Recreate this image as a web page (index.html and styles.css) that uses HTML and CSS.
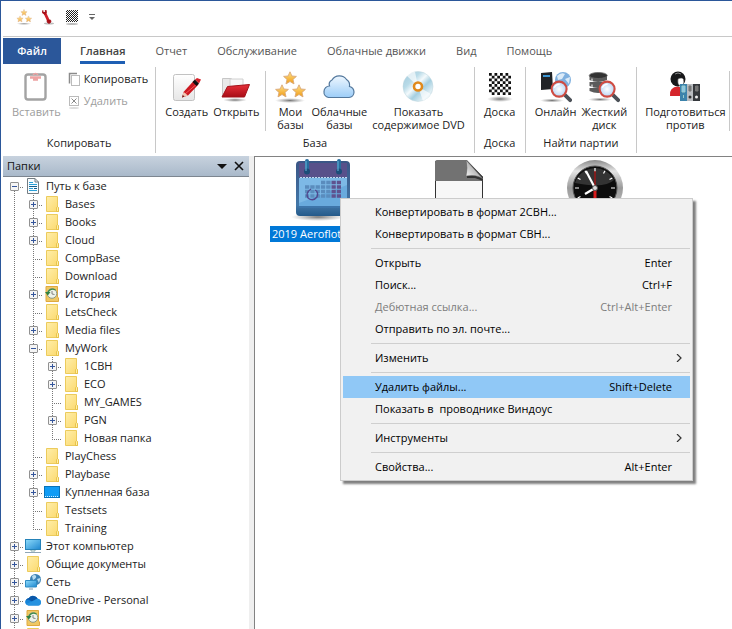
FILE: index.html
```html
<!DOCTYPE html>
<html lang="ru">
<head>
<meta charset="utf-8">
<meta name="viewport" content="width=device-width, initial-scale=1">
<title>Папки</title>
<link rel="stylesheet" href="styles.css">
</head>
<body>
<svg class="defs" aria-hidden="true">
  <defs>
    <linearGradient id="g-folder" x1="0" y1="0" x2="1" y2="1"><stop offset="0" stop-color="#ffeeaa"/><stop offset="1" stop-color="#fbd96d"/></linearGradient>
    <linearGradient id="g-star" x1="0" y1="0" x2="0" y2="1"><stop offset="0" stop-color="#ffe48a"/><stop offset="1" stop-color="#f09a14"/></linearGradient>
    <linearGradient id="g-cloud" x1="0" y1="0" x2="0" y2="1"><stop offset="0" stop-color="#eef7ff"/><stop offset="1" stop-color="#9ccdf8"/></linearGradient>
    <linearGradient id="g-red" x1="0" y1="0" x2="0" y2="1"><stop offset="0" stop-color="#e8303a"/><stop offset="1" stop-color="#a80d16"/></linearGradient>
    <linearGradient id="g-paper" x1="0" y1="0" x2="0" y2="1"><stop offset="0" stop-color="#ffffff"/><stop offset="1" stop-color="#e6e6e6"/></linearGradient>
    <linearGradient id="g-screen" x1="0" y1="0" x2="1" y2="1"><stop offset="0" stop-color="#8fdcfb"/><stop offset="1" stop-color="#1d86cf"/></linearGradient>
    <linearGradient id="g-disc" x1="0" y1="0" x2="1" y2="1"><stop offset="0" stop-color="#9fc9dc"/><stop offset=".3" stop-color="#b9dbe8"/><stop offset=".45" stop-color="#f4fafc"/><stop offset=".6" stop-color="#a5cfe0"/><stop offset=".8" stop-color="#e2f0f5"/><stop offset="1" stop-color="#8fbccf"/></linearGradient>
    <radialGradient id="g-shade"><stop offset="0" stop-color="#777"/><stop offset="1" stop-color="#999" stop-opacity="0"/></radialGradient>
    <radialGradient id="g-lens"><stop offset="0" stop-color="#ffffff"/><stop offset="1" stop-color="#b9d5f4"/></radialGradient>
    <linearGradient id="g-rim" x1="0" y1="0" x2="0" y2="1"><stop offset="0" stop-color="#8a8a8a"/><stop offset=".2" stop-color="#e4e4e4"/><stop offset=".5" stop-color="#9a9a9a"/><stop offset="1" stop-color="#ccc"/></linearGradient>
    <linearGradient id="g-curl" x1="0" y1="1" x2="1" y2="0"><stop offset="0" stop-color="#fafafa"/><stop offset="1" stop-color="#777"/></linearGradient>
    <linearGradient id="g-cal" x1="0" y1="0" x2="0" y2="1"><stop offset="0" stop-color="#3a5585"/><stop offset=".8" stop-color="#4277a8"/><stop offset="1" stop-color="#245a8a"/></linearGradient>
    <pattern id="p-chess" width="5.5" height="5.5" patternUnits="userSpaceOnUse" x="5" y="2"><rect width="5.5" height="5.5" fill="#fff"/><rect width="2.75" height="2.75" fill="#111"/><rect x="2.75" y="2.75" width="2.75" height="2.75" fill="#111"/></pattern>

    <symbol id="star" viewBox="0 0 14 14"><path d="M7 .8 8.9 5 13.4 5.4 10 8.4 11 12.9 7 10.5 3 12.9 4 8.4.6 5.4 5.1 5Z" fill="url(#g-star)" stroke="#d9a878" stroke-width=".9"/></symbol>
    <symbol id="stars" viewBox="0 0 32 32"><ellipse cx="16" cy="29.500" rx="15" ry="2.500" fill="url(#g-shade)"/><use href="#star" x="9" y="0" width="14" height="14"/><use href="#star" x="1" y="13" width="14" height="14"/><use href="#star" x="18" y="13" width="14" height="14"/></symbol>
    <symbol id="board" viewBox="0 0 32 32"><ellipse cx="16" cy="28" rx="13" ry="3" fill="url(#g-shade)"/><rect x="5" y="2" width="22" height="22" fill="url(#p-chess)"/></symbol>
    <symbol id="folder" viewBox="0 0 18 18"><path d="M3.500 1.500H14.500V12L15.500 13V16.500H3.500Z" fill="url(#g-folder)" stroke="#eccb5c"/><path d="M13.500 16.500V12.500Q14.500 11 15.500 12.500V16.500Z" fill="#fff0a8" stroke="#e3bb3c" stroke-width=".8"/></symbol>
    <symbol id="history" viewBox="0 0 18 18"><path d="M3 1.500H14.500V12L15.500 13V16.500H3Z" fill="#efc864" stroke="#dfa93e"/><circle cx="9" cy="8.500" r="4.800" fill="#eef3ea" stroke="#8b9884" stroke-width="1"/><path d="M9 6V9L11.500 9.500" fill="none" stroke="#777" stroke-width=".9"/><path d="M12.500 5A5 5 0 0 0 5 7.500" fill="none" stroke="#3f8a4a" stroke-width="1.400"/><path d="M2 7H7.500L4.800 10.500Z" fill="#2f8240"/></symbol>
    <symbol id="doc" viewBox="0 0 18 18"><path d="M3.500 1.500H11L14.500 5V16.500H3.500Z" fill="#f8fcff" stroke="#737c82"/><path d="M11 1.500V5H14.500" fill="none" stroke="#737c82"/><path d="M5 5.500H9M5 7.500H13M5 11.500H9M5 13.500H13" stroke="#2aa0d8"/><path d="M5 9.500H13M10 11.500H13" stroke="#155d8c"/></symbol>
    <symbol id="tile" viewBox="0 0 18 18"><rect x="1.500" y="3.500" width="15" height="11" fill="#109cf5" stroke="#0873b9"/><path d="M2 13.500H16" stroke="#d5efff" stroke-dasharray="1 1"/></symbol>
    <symbol id="pc" viewBox="0 0 18 18"><rect x="1.500" y="2.500" width="15" height="10" fill="url(#g-screen)" stroke="#2582b8"/><path d="M7 13V14H11V13" stroke="#8aa" fill="none"/><path d="M1 15.500H17" stroke="#8fa6b5"/></symbol>
    <symbol id="net" viewBox="0 0 18 18"><circle cx="11.500" cy="6.500" r="5.500" fill="#3c82b4"/><path d="M8 3Q11 1 12 3T9 7ZM13 6L16.500 5 15 10Z" fill="#b8dcf0"/><path d="M1.500 7.500H12.500V14H1.500Z" fill="url(#g-screen)" stroke="#2f8cc4"/><path d="M5 16H9" stroke="#7e98a8"/></symbol>
    <symbol id="onedrive" viewBox="0 0 18 18"><path d="M4.500 14.500A3.500 3.500 0 0 1 1.500 9.500Q3 7 5 7A5 5 0 0 1 13.500 7.500Q17 8.500 17 11.500T14 14.500Z" fill="#1684d8"/><path d="M1.500 9.500Q3 7 5 7A5 5 0 0 1 13.500 7.500L8 10.500 4 8.500Z" fill="#0a57a8"/><path d="M2 13 8 10.500 13.500 7.500Q17 8.500 17 11.500C16 14.500 15 14.500 14 14.500H4.500Z" fill="#2692e0"/></symbol>
    <symbol id="lens" viewBox="0 0 24 24"><path d="M15.500 15.500 21 21" stroke="#4c5158" stroke-width="4" stroke-linecap="round"/><circle cx="9.500" cy="9.500" r="7.800" fill="url(#g-lens)" stroke="#cf4c43" stroke-width="2.200"/><path d="M4.500 8Q6 4.500 10 4.500" fill="none" stroke="#fff" stroke-width="1.500"/></symbol>
  </defs>
</svg>

<div class="app">
  <header class="quickbar" aria-label="Быстрый доступ">
    <button class="quick" aria-label="Мои базы"><svg class="i16 pale" viewBox="0 0 32 32"><use href="#stars"/></svg></button>
    <button class="quick" aria-label="Параметры"><svg class="i16" viewBox="0 0 16 16"><ellipse cx="9" cy="14.500" rx="5" ry="1" fill="#bbb"/><path d="M4.500 3 8.500 12" stroke="#d01f29" stroke-width="2.800"/><path d="M2.500 1.500 2.500 4 5 5.500 6.500 3.500 6 1M7.500 11 7 13 9 14.500 11 13 10.500 11Z" fill="#a70f18" stroke="#a70f18" stroke-width=".8"/><circle cx="4.200" cy="2" r="1" fill="#fff"/></svg></button>
    <button class="quick" aria-label="Доска"><svg class="i16" viewBox="0 0 16 16"><ellipse cx="8" cy="15" rx="6" ry="1" fill="#bbb"/><path d="M2 2.500H14M2 4.500H14M2 6.500H14M2 8.500H14M2 10.500H14M2 12.500H14" stroke="#222" stroke-dasharray="1 1"/><path d="M3 1.500H14M3 3.500H14M3 5.500H14M3 7.500H14M3 9.500H14M3 11.500H14" stroke="#222" stroke-dasharray="1 1"/></svg></button>
    <button class="quick" aria-label="Настройка панели"><svg class="i8" viewBox="0 0 8 8"><path d="M1 1.500H7" stroke="#666"/><path d="M1 4H7L4 7Z" fill="#666"/></svg></button>
  </header>

  <nav class="tabs">
    <button class="file-tab">Файл</button>
    <button class="tab active">Главная</button>
    <button class="tab">Отчет</button>
    <button class="tab">Обслуживание</button>
    <button class="tab">Облачные движки</button>
    <button class="tab">Вид</button>
    <button class="tab">Помощь</button>
  </nav>

  <div class="ribbon">
    <section class="group">
      <div class="tools">
        <button class="big off" disabled><svg class="i32" viewBox="0 0 32 32"><rect x="5.500" y="3.500" width="20" height="25" rx="2.500" fill="#fff" stroke="#a3a3a3" stroke-width="2.400"/><path d="M10 6.500H21M13 8.500H18" stroke="#eda3a3" stroke-width="2.500"/><path d="M13 4Q15.500 1 18 4" fill="none" stroke="#eda3a3" stroke-width="1.500"/></svg><span>Вставить</span></button>
        <div class="stack">
          <button class="small"><svg class="i16" viewBox="0 0 16 16"><path d="M3.500 12.500V2.500H11" fill="none" stroke="#8b8b8b" stroke-width="1.500"/><rect x="5.500" y="4.500" width="8" height="10" fill="#fff" stroke="#bcbcbc"/></svg><span>Копировать</span></button>
          <button class="small off" disabled><svg class="i16" viewBox="0 0 16 16"><ellipse cx="8" cy="15" rx="5" ry="1" fill="#ddd"/><rect x="3.500" y="3.500" width="9" height="9" fill="#fff" stroke="#bbb"/><path d="M5.500 5.500 10.500 10.500M10.500 5.500 5.500 10.500" stroke="#8a8a8a"/></svg><span>Удалить</span></button>
        </div>
      </div>
      <h2>Копировать</h2>
    </section>
    <section class="group">
      <div class="tools">
        <button class="big"><svg class="i32" viewBox="0 0 32 32"><rect x="2.500" y="3.500" width="21" height="26" rx="2" fill="url(#g-paper)" stroke="#c2c2c2"/><path d="M11 26.500 12.500 21 23 9.500 27.500 13.500 17 24.500Z" fill="#cc1820"/><path d="M12.500 21 14 23 27 12" fill="none" stroke="#f2565a"/><path d="M21.500 11 24 8.500 28 12.500 25.500 15Z" fill="#111"/><path d="M24 8.500 26 7 30 8.500 28 12.500Z" fill="#d7222b"/><path d="M11 26.500 12.500 21 17 24.500Z" fill="#efc8b4"/><path d="M11 26.500 11.800 24 13.500 25.500Z" fill="#611"/></svg><span>Создать</span></button>
        <button class="big"><svg class="i32" viewBox="0 0 32 32"><ellipse cx="15" cy="29" rx="12" ry="2" fill="url(#g-shade)"/><path d="M2.500 25V7.500H11L13.500 9.500H18V25Z" fill="#e9e9e9" stroke="#c6c6c6"/><path d="M10 8H23V20H10Z" fill="#f7f7f7" stroke="#d0d0d0"/><path d="M2 26 7.500 15.500 29.500 13.500 24.500 26Z" fill="url(#g-red)" stroke="#a3121a"/></svg><span>Открыть</span></button>
        <span class="rule"></span>
        <button class="big"><svg class="i32"><use href="#stars"/></svg><span>Мои<br>базы</span></button>
        <button class="big"><svg class="i32" viewBox="0 0 32 32"><path d="M5.500 26.500A5.500 5.500 0 0 1 1 20.500 5.500 5.500 0 0 1 6.500 15 5 5 0 0 1 9 9 8.500 8 0 0 1 23.500 8.500 7 7 0 0 1 26.500 15.500 6 6 0 0 1 31 21 5.500 5.500 0 0 1 26 26.500Z" fill="url(#g-cloud)" stroke="#52779c" stroke-width="1.200"/></svg><span>Облачные<br>базы</span></button>
        <button class="big"><svg class="i32" viewBox="0 0 32 32"><circle cx="16" cy="15.500" r="15" fill="url(#g-disc)" stroke="#bdd4dd" stroke-width=".5"/><path d="M16 15.500 4 4Q8 .5 13 .8ZM16 15.500 29 23Q26 28 21 30Z" fill="#fff" opacity=".65"/><circle cx="16" cy="15.500" r="4" fill="#fff" stroke="#e08a1c" stroke-width="2.600"/></svg><span>Показать<br>содержимое DVD</span></button>
      </div>
      <h2>База</h2>
    </section>
    <section class="group">
      <div class="tools">
        <button class="big"><svg class="i32"><use href="#board"/></svg><span>Доска</span></button>
      </div>
      <h2>Доска</h2>
    </section>
    <section class="group">
      <div class="tools">
        <button class="big"><svg class="i32" viewBox="0 0 32 32"><ellipse cx="12" cy="29.500" rx="12" ry="2" fill="url(#g-shade)"/><circle cx="23" cy="9" r="8" fill="#7fb0df"/><path d="M17 5Q21 1 25 3L22 8 18 9ZM25 8 30 6 29 13Z" fill="#dcebf8"/><path d="M1 2 12 1 13 18 1 19Z" fill="#202327"/><path d="M3 5H10" stroke="#3fa4e8" stroke-width="1.800"/><use href="#lens" x="10" y="9" width="23" height="23"/></svg><span>Онлайн</span></button>
        <button class="big"><svg class="i32" viewBox="0 0 32 32"><ellipse cx="12" cy="28.500" rx="12" ry="2" fill="url(#g-shade)"/><path d="M1.500 5V9Q10 13 19 9V5ZM1.500 11V15Q10 19 19 15V11ZM1.500 17V20Q10 24 19 20V17Z" fill="#5b5b5b"/><path d="M4 7.500V10M4 13.500V16" stroke="#c9c9c9" stroke-width="1.500"/><ellipse cx="10.250" cy="4.500" rx="9" ry="3" fill="#333" stroke="#666" stroke-width=".8"/><use href="#lens" x="10" y="9" width="23" height="23"/></svg><span>Жесткий<br>диск</span></button>
      </div>
      <h2>Найти партии</h2>
    </section>
    <section class="group last">
      <div class="tools">
        <button class="big"><svg class="i32" viewBox="0 0 32 32"><path d="M1 25Q0 16 9 15.500 14 16 14 25Z" fill="#d5252b"/><circle cx="9" cy="8" r="7.500" fill="#17181a"/><path d="M9 8Q13 6 14.500 8.500 16 14 11 15 8 13 9 8Z" fill="#fff" stroke="#555" stroke-width=".5"/><path d="M6 3Q9 1 12 3" stroke="#888" fill="none"/><rect x="11" y="13" width="7" height="17" fill="#3c83ab"/><path d="M13 15H16V21H13ZM14.500 24V27" fill="#8ac5e6" stroke="#9cc"/><rect x="18" y="13" width="6" height="17" fill="#b9bcc0"/><rect x="24" y="13" width="7" height="17" fill="#35383c"/><path d="M20 15H22V20H20ZM26.500 15H29V20H26.500Z" fill="#777" stroke="#777"/><circle cx="21" cy="26" r="1.500" fill="#333"/><circle cx="27.500" cy="26" r="1.500" fill="#eee"/></svg><span>Подготовиться<br>против</span></button>
        <span class="rule"></span>
      </div>
    </section>
  </div>

  <div class="workspace">
    <aside class="panel">
      <div class="panel-head">
        <h1>Папки</h1>
        <button class="head-btn" aria-label="Меню панели"><svg class="i10" viewBox="0 0 10 10"><path d="M0 3H10L5 8Z" fill="#111"/></svg></button>
        <button class="head-btn" aria-label="Закрыть"><svg class="i10" viewBox="0 0 10 10"><path d="M1 1 9 9M9 1 1 9" stroke="#111" stroke-width="1.600"/></svg></button>
      </div>
      <ul class="tree root">
        <li><div class="row"><span class="knot"><button class="box" aria-label="Свернуть"></button></span><svg class="i18"><use href="#doc"/></svg><span>Путь к базе</span></div>
          <ul class="tree">
            <li><div class="row"><span class="knot"><button class="box plus" aria-label="Развернуть"></button></span><svg class="i18"><use href="#folder"/></svg><span>Bases</span></div></li>
            <li><div class="row"><span class="knot"><button class="box plus" aria-label="Развернуть"></button></span><svg class="i18"><use href="#folder"/></svg><span>Books</span></div></li>
            <li><div class="row"><span class="knot"><button class="box plus" aria-label="Развернуть"></button></span><svg class="i18"><use href="#folder"/></svg><span>Cloud</span></div></li>
            <li><div class="row"><span class="knot"></span><svg class="i18"><use href="#folder"/></svg><span>CompBase</span></div></li>
            <li><div class="row"><span class="knot"></span><svg class="i18"><use href="#folder"/></svg><span>Download</span></div></li>
            <li><div class="row"><span class="knot"><button class="box plus" aria-label="Развернуть"></button></span><svg class="i18"><use href="#history"/></svg><span>История</span></div></li>
            <li><div class="row"><span class="knot"></span><svg class="i18"><use href="#folder"/></svg><span>LetsCheck</span></div></li>
            <li><div class="row"><span class="knot"><button class="box plus" aria-label="Развернуть"></button></span><svg class="i18"><use href="#folder"/></svg><span>Media files</span></div></li>
            <li><div class="row"><span class="knot"><button class="box" aria-label="Свернуть"></button></span><svg class="i18"><use href="#folder"/></svg><span>MyWork</span></div>
              <ul class="tree">
                <li><div class="row"><span class="knot"><button class="box plus" aria-label="Развернуть"></button></span><svg class="i18"><use href="#folder"/></svg><span>1CBH</span></div></li>
                <li><div class="row"><span class="knot"><button class="box plus" aria-label="Развернуть"></button></span><svg class="i18"><use href="#folder"/></svg><span>ECO</span></div></li>
                <li><div class="row"><span class="knot"></span><svg class="i18"><use href="#folder"/></svg><span>MY_GAMES</span></div></li>
                <li><div class="row"><span class="knot"><button class="box plus" aria-label="Развернуть"></button></span><svg class="i18"><use href="#folder"/></svg><span>PGN</span></div></li>
                <li><div class="row"><span class="knot"></span><svg class="i18"><use href="#folder"/></svg><span>Новая папка</span></div></li>
              </ul>
            </li>
            <li><div class="row"><span class="knot"></span><svg class="i18"><use href="#folder"/></svg><span>PlayChess</span></div></li>
            <li><div class="row"><span class="knot"><button class="box plus" aria-label="Развернуть"></button></span><svg class="i18"><use href="#folder"/></svg><span>Playbase</span></div></li>
            <li><div class="row"><span class="knot"><button class="box plus" aria-label="Развернуть"></button></span><svg class="i18"><use href="#tile"/></svg><span>Купленная база</span></div></li>
            <li><div class="row"><span class="knot"></span><svg class="i18"><use href="#folder"/></svg><span>Testsets</span></div></li>
            <li><div class="row"><span class="knot"></span><svg class="i18"><use href="#folder"/></svg><span>Training</span></div></li>
          </ul>
        </li>
        <li><div class="row"><span class="knot"><button class="box plus" aria-label="Развернуть"></button></span><svg class="i18"><use href="#pc"/></svg><span>Этот компьютер</span></div></li>
        <li><div class="row"><span class="knot"><button class="box plus" aria-label="Развернуть"></button></span><svg class="i18"><use href="#folder"/></svg><span>Общие документы</span></div></li>
        <li><div class="row"><span class="knot"><button class="box plus" aria-label="Развернуть"></button></span><svg class="i18"><use href="#net"/></svg><span>Сеть</span></div></li>
        <li><div class="row"><span class="knot"><button class="box plus" aria-label="Развернуть"></button></span><svg class="i18"><use href="#onedrive"/></svg><span>OneDrive - Personal</span></div></li>
        <li><div class="row"><span class="knot"><button class="box plus" aria-label="Развернуть"></button></span><svg class="i18"><use href="#history"/></svg><span>История</span></div></li>
        <li><div class="row"><span class="knot"></span><svg class="i18"><use href="#folder"/></svg></div></li>
      </ul>
    </aside>

    <main class="files">
      <div class="grid">
        <button class="item selected">
          <svg class="i64" viewBox="0 0 64 64"><ellipse cx="27" cy="59" rx="27" ry="4" fill="url(#g-shade)"/><rect x="5" y="3" width="54" height="55" rx="4" fill="url(#g-cal)"/><path d="M8 5H56V19H8Z" fill="#58508a"/><path d="M8 20H56V48H8Z" fill="#69aadd"/><path d="M8 20H56V27L8 45Z" fill="#7db9e6"/><path d="M8 48H56V50H8Z" fill="#3d75aa"/><path d="M9 19.500H56" stroke="#c4d4ec" stroke-dasharray="2 1"/><path d="M30 24.500H40M14 29H40M14 33.500H40M14 38H40" stroke="#5a8cbd" stroke-width="3.700" stroke-dasharray="4.300 1"/><path d="M40.500 24.500H50M40.500 29H50M40.500 33.500H50M40.500 38H50" stroke="#5f528f" stroke-width="3.700" stroke-dasharray="4.300 1"/><path d="M20 31Q14 35 17 40 22 44 26 39 28 34 24 32" fill="none" stroke="#51488f" stroke-width="1.300"/><path d="M16 3V14M48 3V14" stroke="#276c9d" stroke-width="4" stroke-linecap="round"/><circle cx="16" cy="13.500" r="3" fill="#1b4d79"/><circle cx="48" cy="13.500" r="3" fill="#1b4d79"/><path d="M15 3V13M47 3V13" stroke="#69b7dd"/></svg>
          <span class="name">2019 Aeroflot</span>
        </button>
        <button class="item" aria-label="Документ">
          <svg class="i64" viewBox="0 0 64 64"><path d="M8.500 3.500H40L55.500 19V62H8.500Z" fill="#f7f7f7" stroke="#333"/><path d="M8 5Q8 2 10 2H40L56 19V23H8Z" fill="#727272"/><path d="M40 3 56 19V23L48 20H40Z" fill="#333"/><path d="M39 2Q41 10 39 18 50 16 56 21Z" fill="url(#g-curl)" stroke="#666" stroke-width=".5"/></svg>
        </button>
        <button class="item" aria-label="Часы">
          <svg class="i64" viewBox="0 0 64 64"><circle cx="32" cy="30" r="28" fill="url(#g-rim)"/><circle cx="32" cy="30" r="22" fill="#0d0d0d" stroke="#555"/><path d="M12 25A21 21 0 0 1 51 22Q42 31 12 25Z" fill="#333"/><path d="M32 10V14M42 12.700 40.500 15.500M49.300 20 46.500 21.500M52 30H48M49.300 40 46.500 38.500M14.700 40 17.500 38.500M12 30H16M14.700 20 17.500 21.500M22 12.700 23.500 15.500" stroke="#fff" stroke-width="1.200"/><path d="M32 13V30" stroke="#9b1717" stroke-width="1.500"/><path d="M32 32V40" stroke="#d71c1c" stroke-width="3"/><path d="M23 13 32 30 22 36" fill="none" stroke="#fff" stroke-width="2.200"/><circle cx="32" cy="30" r="2.500" fill="#ddd" stroke="#555"/></svg>
        </button>
      </div>

      <div class="menu" role="menu">
        <button role="menuitem"><span>Конвертировать в формат 2CBH...</span></button>
        <button role="menuitem"><span>Конвертировать в формат CBH...</span></button>
        <hr>
        <button role="menuitem"><span>Открыть</span><kbd>Enter</kbd></button>
        <button role="menuitem"><span>Поиск...</span><kbd>Ctrl+F</kbd></button>
        <button role="menuitem" disabled><span>Дебютная ссылка...</span><kbd>Ctrl+Alt+Enter</kbd></button>
        <button role="menuitem"><span>Отправить по эл. почте...</span></button>
        <hr>
        <button role="menuitem" class="sub"><span>Изменить</span><svg class="i8" viewBox="0 0 8 8"><path d="M2 0 6 4 2 8" fill="none" stroke="#333" stroke-width="1.200"/></svg></button>
        <hr>
        <button role="menuitem" class="current"><span>Удалить файлы...</span><kbd>Shift+Delete</kbd></button>
        <button role="menuitem"><span>Показать в&nbsp; проводнике Виндоус</span></button>
        <hr>
        <button role="menuitem" class="sub"><span>Инструменты</span><svg class="i8" viewBox="0 0 8 8"><path d="M2 0 6 4 2 8" fill="none" stroke="#333" stroke-width="1.200"/></svg></button>
        <hr>
        <button role="menuitem"><span>Свойства...</span><kbd>Alt+Enter</kbd></button>
      </div>
    </main>
  </div>
</div>
</body>
</html>
```
FILE: styles.css
```css
* {
  box-sizing: border-box;
}

body {
  margin: 0;
  background: #fff;
  color: #222;
  font: 11px/16px "Open Sans", "Noto Sans", sans-serif;
}

button {
  margin: 0;
  padding: 0;
  border: 0;
  background: none;
  color: inherit;
  font: inherit;
}

h1,
h2 {
  margin: 0;
  font: inherit;
}

svg {
  display: block;
  flex: none;
}

.defs {
  position: absolute;
  width: 0;
  height: 0;
}

.i8 { width: 8px; height: 8px; }
.i10 { width: 10px; height: 10px; }
.i16 { width: 16px; height: 16px; }
.i18 { width: 18px; height: 18px; }
.i32 { width: 32px; height: 32px; }
.i64 { width: 64px; height: 64px; }

.pale {
  opacity: .8;
}

.app {
  display: flex;
  flex-direction: column;
  height: 100vh;
  overflow: hidden;
  border: solid #2b579a;
  border-width: 1px 0 0 1px;
  padding-left: 2px;
}

/* Quick access bar */
.quickbar {
  display: flex;
  align-items: center;
  gap: 8px;
  height: 36px;
  flex: none;
  padding: 0 13px 4px;
  border-bottom: 1px solid #c8c8c8;
}

/* Tabs */
.tabs {
  display: flex;
  flex: none;
  gap: 30px;
  height: 26px;
  margin-top: 1px;
  color: #555;
}

.file-tab {
  width: 58px;
  margin-right: -11px;
  background: #2b579a;
  color: #fff;
  font-weight: 600;
}

.tab {
  padding-top: 3px;
  border-bottom: 3px solid transparent;
}

.tab.active {
  border-bottom-color: #1e5fb4;
  color: #444;
  font-weight: 600;
}

/* Ribbon */
.ribbon {
  display: flex;
  flex: none;
  height: 92px;
  padding: 3px 0;
}

.group {
  display: flex;
  flex: none;
  flex-direction: column;
  justify-content: space-between;
  padding: 4px 7px 2px;
  border-right: 1px solid #c8c8c8;
  text-align: center;
}

.group.last {
  padding-right: 0;
  padding-left: 6px;
  border-right: 0;
}

.tools {
  display: flex;
  align-items: flex-start;
  gap: 1px;
}

.big {
  display: flex;
  flex-direction: column;
  align-items: center;
  gap: 2px;
  padding: 0 2px;
  line-height: 13px;
}

.stack {
  display: flex;
  flex-direction: column;
  gap: 6px;
  padding-left: 2px;
}

.small {
  display: flex;
  align-items: center;
  gap: 2px;
}

.off {
  color: #9d9d9d;
}

.rule {
  align-self: stretch;
  min-height: 58px;
  margin: 0 5px 0 3px;
  border-left: 1px solid #c8c8c8;
}

.last .rule {
  margin: 0;
}

/* Folder panel */
.workspace {
  display: flex;
  flex: 1;
  min-height: 0;
}

.panel {
  flex: none;
  width: 251px;
  overflow: hidden;
  border-right: 5px solid #efefef;
}

.panel-head {
  display: flex;
  align-items: center;
  gap: 7px;
  height: 21px;
  padding: 0 5px 0 4px;
  border-bottom: 1px solid #7d8690;
  background: linear-gradient(#c7d2de, #a9b9ca);
  color: #111;
}

.panel-head h1 {
  flex: 1;
}

.tree {
  margin: 0;
  padding: 0 0 0 19px;
  list-style: none;
}

.tree.root {
  padding: 0 0 0 2px;
}

.tree li {
  background: repeating-linear-gradient(#777 0 1px, transparent 1px 2px) 9px 0 / 1px 100% no-repeat;
}

.tree li:last-child {
  background-size: 1px 10px;
}

.tree.root > li:first-child {
  background-position: 9px 10px;
}

.row {
  display: flex;
  align-items: center;
  height: 18px;
  white-space: nowrap;
}

.row > span:last-child {
  padding-left: 4px;
}

.knot {
  display: flex;
  align-items: center;
  flex: none;
  width: 19px;
  height: 18px;
  padding: 1px 0 0 5px;
  background: repeating-linear-gradient(90deg, #777 0 1px, transparent 1px 2px) 9px 10px / 12px 1px no-repeat;
}

.box {
  width: 9px;
  height: 9px;
  border: 1px solid #919191;
  border-radius: 1px;
  background: linear-gradient(#35569b, #35569b) 1px 3px / 5px 1px no-repeat, #f5f5f5;
}

.box.plus {
  background: linear-gradient(#35569b, #35569b) 1px 3px / 5px 1px no-repeat, linear-gradient(#35569b, #35569b) 3px 1px / 1px 5px no-repeat, #f5f5f5;
}

/* File list */
.files {
  position: relative;
  flex: 1;
  min-width: 0;
  border: solid #828282;
  border-width: 1px 0 0 1px;
}

.grid {
  display: grid;
  grid-template-columns: repeat(auto-fill, 136px);
}

.item {
  display: flex;
  flex-direction: column;
  align-items: center;
  gap: 4px;
  padding-top: 1px;
}

.name {
  min-width: 106px;
  padding: 0 2px;
  line-height: 16px;
  text-align: left;
}

.selected .name {
  background: #0078d7;
  color: #fff;
}

/* Context menu */
.menu {
  position: absolute;
  top: 41px;
  left: 85px;
  width: 353px;
  padding: 2px;
  border: 1px solid #ccc;
  background: #f1f1f1;
  box-shadow: 3px 3px 2px rgba(0, 0, 0, .5);
  color: #000;
}

.menu button {
  display: flex;
  align-items: center;
  justify-content: space-between;
  width: 100%;
  height: 22px;
  padding: 0 18px 0 32px;
}

.menu button.sub {
  padding-right: 7px;
}

.menu button:disabled {
  color: #7d7d7d;
}

.menu button.current {
  background: #90c8f6;
}

.menu kbd {
  font: inherit;
}

.menu hr {
  height: 1px;
  margin: 3px 0 3px 28px;
  border: 0;
  background: #cfcfcf;
}
```
